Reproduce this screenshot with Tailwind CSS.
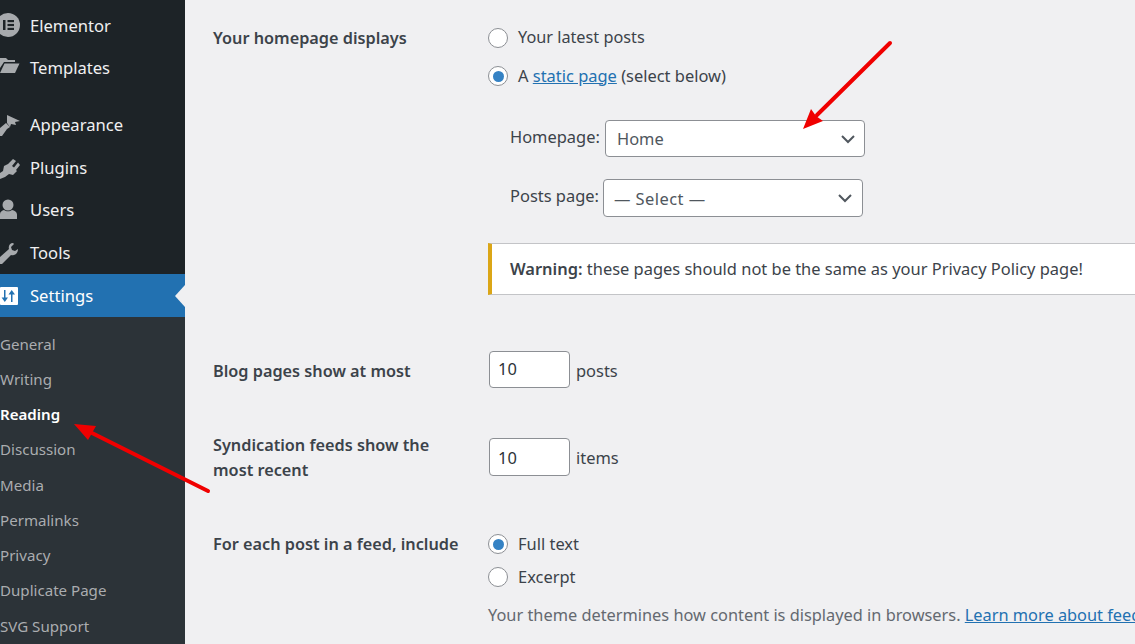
<!doctype html>
<html lang="en">
<head>
<meta charset="utf-8">
<title>Reading Settings</title>
<script src="https://cdn.jsdelivr.net/npm/@tailwindcss/browser@4"></script>
</head>
<body class="m-0 bg-[#f0f0f2]">
<div class="relative flex h-[644px] w-[1135px] overflow-hidden bg-[#f0f0f2] font-['Noto_Sans',sans-serif] text-[16.45px] text-[#3c434a]">
  <aside class="flex h-full w-[185px] shrink-0 flex-col bg-[#1d2327] pt-[5px] text-[16.6px] text-[#f0f0f1]">
    <div class="flex h-[42px] items-center pl-[30px] relative">
      <svg class="absolute left-0 top-[8px]" width="24" height="26" viewBox="0 0 24 26"><circle cx="8" cy="12" r="12" fill="#a7aaad"/><rect x="3" y="7" width="2.5" height="10" fill="#1d2327"/><rect x="7.500" y="7" width="6.5" height="2.2" fill="#1d2327"/><rect x="7.500" y="10.9" width="6.5" height="2.2" fill="#1d2327"/><rect x="7.500" y="14.8" width="6.5" height="2.2" fill="#1d2327"/></svg>
      <span>Elementor</span>
    </div>
    <div class="flex h-[42px] items-center pl-[30px] relative">
      <svg class="absolute left-0 top-[9px]" width="20" height="18" viewBox="0 0 20 18"><path d="M0 2h6l2 2h7v2H4L0 12z" fill="#a7aaad"/><path d="M4.500 7.500H19.500L15 17H0z" fill="#a7aaad"/></svg>
      <span>Templates</span>
    </div>
    <div class="mt-[15px] flex h-[42.5px] items-center pl-[30px] relative">
      <svg class="absolute left-0 top-[10px]" width="21" height="22" viewBox="0 0 21 22"><path d="M7 1l13 6-5 1 1 3-5-1-1 3-3-4z" fill="#a7aaad"/><path d="M6 9l4 4-3 2-5 7H0v-8z" fill="#a7aaad"/></svg>
      <span>Appearance</span>
    </div>
    <div class="flex h-[42.5px] items-center pl-[30px] relative">
      <svg class="absolute left-0 top-[11px]" width="20" height="22" viewBox="0 0 20 22"><path d="M13 1l3 2-4 5 2 1.500 4-5 2 2.500-4 5 1 1-4 4-4-1-4 3-5 2v-6l3-2 1-5 4-2z" fill="#a7aaad"/></svg>
      <span class="translate-y-px">Plugins</span>
    </div>
    <div class="flex h-[42.5px] items-center pl-[30px] relative">
      <svg class="absolute left-0 top-[10px]" width="18" height="22" viewBox="0 0 18 22"><circle cx="8" cy="6" r="5.500" fill="#a7aaad"/><path d="M0 20v-5c0-2 2-3.500 4-4 2 1.800 6 1.800 8 0 2.500.5 5 2 5 4.500V20z" fill="#a7aaad"/></svg>
      <span>Users</span>
    </div>
    <div class="flex h-[42.5px] items-center pl-[30px] relative">
      <svg class="absolute left-0 top-[10px]" width="19" height="23" viewBox="0 0 19 23"><path d="M13 1c-3 0-5 3-4 6L0 15v7h2l9-9c4 1 7-2 7-6l-3 2-3-1-1-3 3-3z" fill="#a7aaad"/></svg>
      <span class="translate-y-px">Tools</span>
    </div>
    <div class="relative flex h-[43px] items-center bg-[#2271b1] pl-[30px] text-white">
      <svg class="absolute left-0 top-[13px]" width="18" height="18" viewBox="0 0 18 18"><rect width="18" height="18" rx="1" fill="#fff"/><path d="M4 3h1.500v7.500H8L4.800 15 1.600 10.500H4zM12.500 15H11V7.500H8.500L11.700 3 15 7.500h-2.500z" fill="#2271b1"/></svg>
      <span class="translate-y-px">Settings</span>
      <div class="absolute right-0 top-[11px] h-0 w-0 border-y-[11px] border-r-[10px] border-y-transparent border-r-[#f0f0f2]"></div>
    </div>
    <nav class="flex flex-1 flex-col bg-[#2c3338] pt-[9.4px] text-[15.1px] text-[#c3c4c7]/85">
      <div class="flex h-[35.250px] items-center">General</div>
      <div class="flex h-[35.250px] items-center">Writing</div>
      <div class="flex h-[35.250px] items-center font-semibold text-white">Reading</div>
      <div class="flex h-[35.250px] items-center">Discussion</div>
      <div class="flex h-[35.250px] items-center">Media</div>
      <div class="flex h-[35.250px] items-center">Permalinks</div>
      <div class="flex h-[35.250px] items-center">Privacy</div>
      <div class="flex h-[35.250px] items-center">Duplicate Page</div>
      <div class="flex h-[35.250px] items-center">SVG Support</div>
    </nav>
  </aside>

  <main class="min-w-0 flex-1 overflow-hidden pl-[28px] pt-[28px]">
    <section class="flex">
      <div class="w-[275px] shrink-0 text-[16.25px] font-semibold leading-[20px]">Your homepage displays</div>
      <div class="min-w-0 flex-1">
        <div class="flex h-[20px] items-center gap-[10px]">
          <span class="size-[20px] rounded-full border border-[#8c8f94] bg-white"></span><span class="-translate-y-px text-[16.25px]">Your latest posts</span>
        </div>
        <div class="mt-[18px] flex h-[20px] items-center gap-[10px]">
          <span class="flex size-[20px] items-center justify-center rounded-full border border-[#8c8f94] bg-white"><span class="size-[11px] rounded-full bg-[#3582c4]"></span></span>
          <span>A <a class="text-[#2271b1] underline">static page</a> (select below)</span>
        </div>
        <div class="mt-[34px] flex h-[37px] items-center pl-[22px]">
          <span class="w-[95px] shrink-0 -translate-y-px">Homepage:</span>
          <div class="flex h-[37px] w-[260px] items-center justify-between rounded-[4px] border border-[#8c8f94] bg-white pl-[11px] pr-[8px] text-[#50575e]">
            <span class="translate-y-px">Home</span>
            <svg width="16" height="10" viewBox="0 0 16 10"><path d="M2 2l6 6 6-6" fill="none" stroke="#50575e" stroke-width="2"/></svg>
          </div>
        </div>
        <div class="mt-[22px] flex h-[38px] items-center pl-[22px]">
          <span class="w-[93px] shrink-0 -translate-y-[2px]">Posts page:</span>
          <div class="flex h-[38px] w-[260px] items-center justify-between rounded-[4px] border border-[#8c8f94] bg-white pl-[10px] pr-[9px] text-[#50575e]">
            <span class="translate-y-px tracking-[0.45px]">— Select —</span>
            <svg width="16" height="10" viewBox="0 0 16 10"><path d="M2 2l6 6 6-6" fill="none" stroke="#50575e" stroke-width="2"/></svg>
          </div>
        </div>
        <div class="mt-[26px] flex h-[52px] w-[700px] items-center border-y border-r border-y-[#c3c4c7] border-l-[4px] border-l-[#dba617] bg-white pl-[18px]">
          <span class="whitespace-nowrap"><b class="font-semibold">Warning:</b> these pages should not be the same as your Privacy Policy page!</span>
        </div>
      </div>
    </section>

    <section class="mt-[56px] flex items-center">
      <div class="w-[276px] shrink-0 translate-y-[1.5px] text-[16.25px] font-semibold">Blog pages show at most</div>
      <div class="flex h-[37px] w-[81px] items-center rounded-[4px] border border-[#8c8f94] bg-white pl-[8px] text-[#2c3338]">10</div>
      <span class="ml-[6px] translate-y-[1.5px]">posts</span>
    </section>

    <section class="mt-[50px] flex items-start">
      <div class="-mt-[5px] w-[276px] shrink-0 text-[16.25px] font-semibold leading-[25px]">Syndication feeds show the<br>most recent</div>
      <div class="flex h-[38px] w-[81px] items-center rounded-[4px] border border-[#8c8f94] bg-white pl-[8px] text-[#2c3338]"><span class="translate-y-px">10</span></div>
      <span class="ml-[6px] flex h-[38px] translate-y-px items-center">items</span>
    </section>

    <section class="mt-[51px] flex">
      <div class="w-[275px] shrink-0 text-[16.25px] font-semibold leading-[20px]">For each post in a feed, include</div>
      <div class="min-w-0 flex-1">
        <div class="flex h-[20px] items-center gap-[10px]">
          <span class="flex size-[20px] items-center justify-center rounded-full border border-[#8c8f94] bg-white"><span class="size-[11px] rounded-full bg-[#3582c4]"></span></span>
          <span>Full text</span>
        </div>
        <div class="mt-[13px] flex h-[20px] items-center gap-[10px]">
          <span class="size-[20px] rounded-full border border-[#8c8f94] bg-white"></span><span>Excerpt</span>
        </div>
        <p class="mt-[16px] w-[800px] whitespace-nowrap text-[16.35px] leading-[24px] text-[#646970]">Your theme determines how content is displayed in browsers. <a class="text-[#2271b1] underline">Learn more about feeds</a></p>
      </div>
    </section>
  </main>

  <svg class="pointer-events-none absolute left-0 top-0" width="1135" height="644" viewBox="0 0 1135 644">
    <path d="M890 43L817 115" stroke="#f00000" stroke-width="4" stroke-linecap="round"/>
    <path d="M803 129L811 109L816 116L823 121Z" fill="#f00000"/>
    <path d="M208 491L92 433" stroke="#f00000" stroke-width="4" stroke-linecap="round"/>
    <path d="M74 424L96 426L92 433L88 440Z" fill="#f00000"/>
  </svg>
</div>
</body>
</html>
